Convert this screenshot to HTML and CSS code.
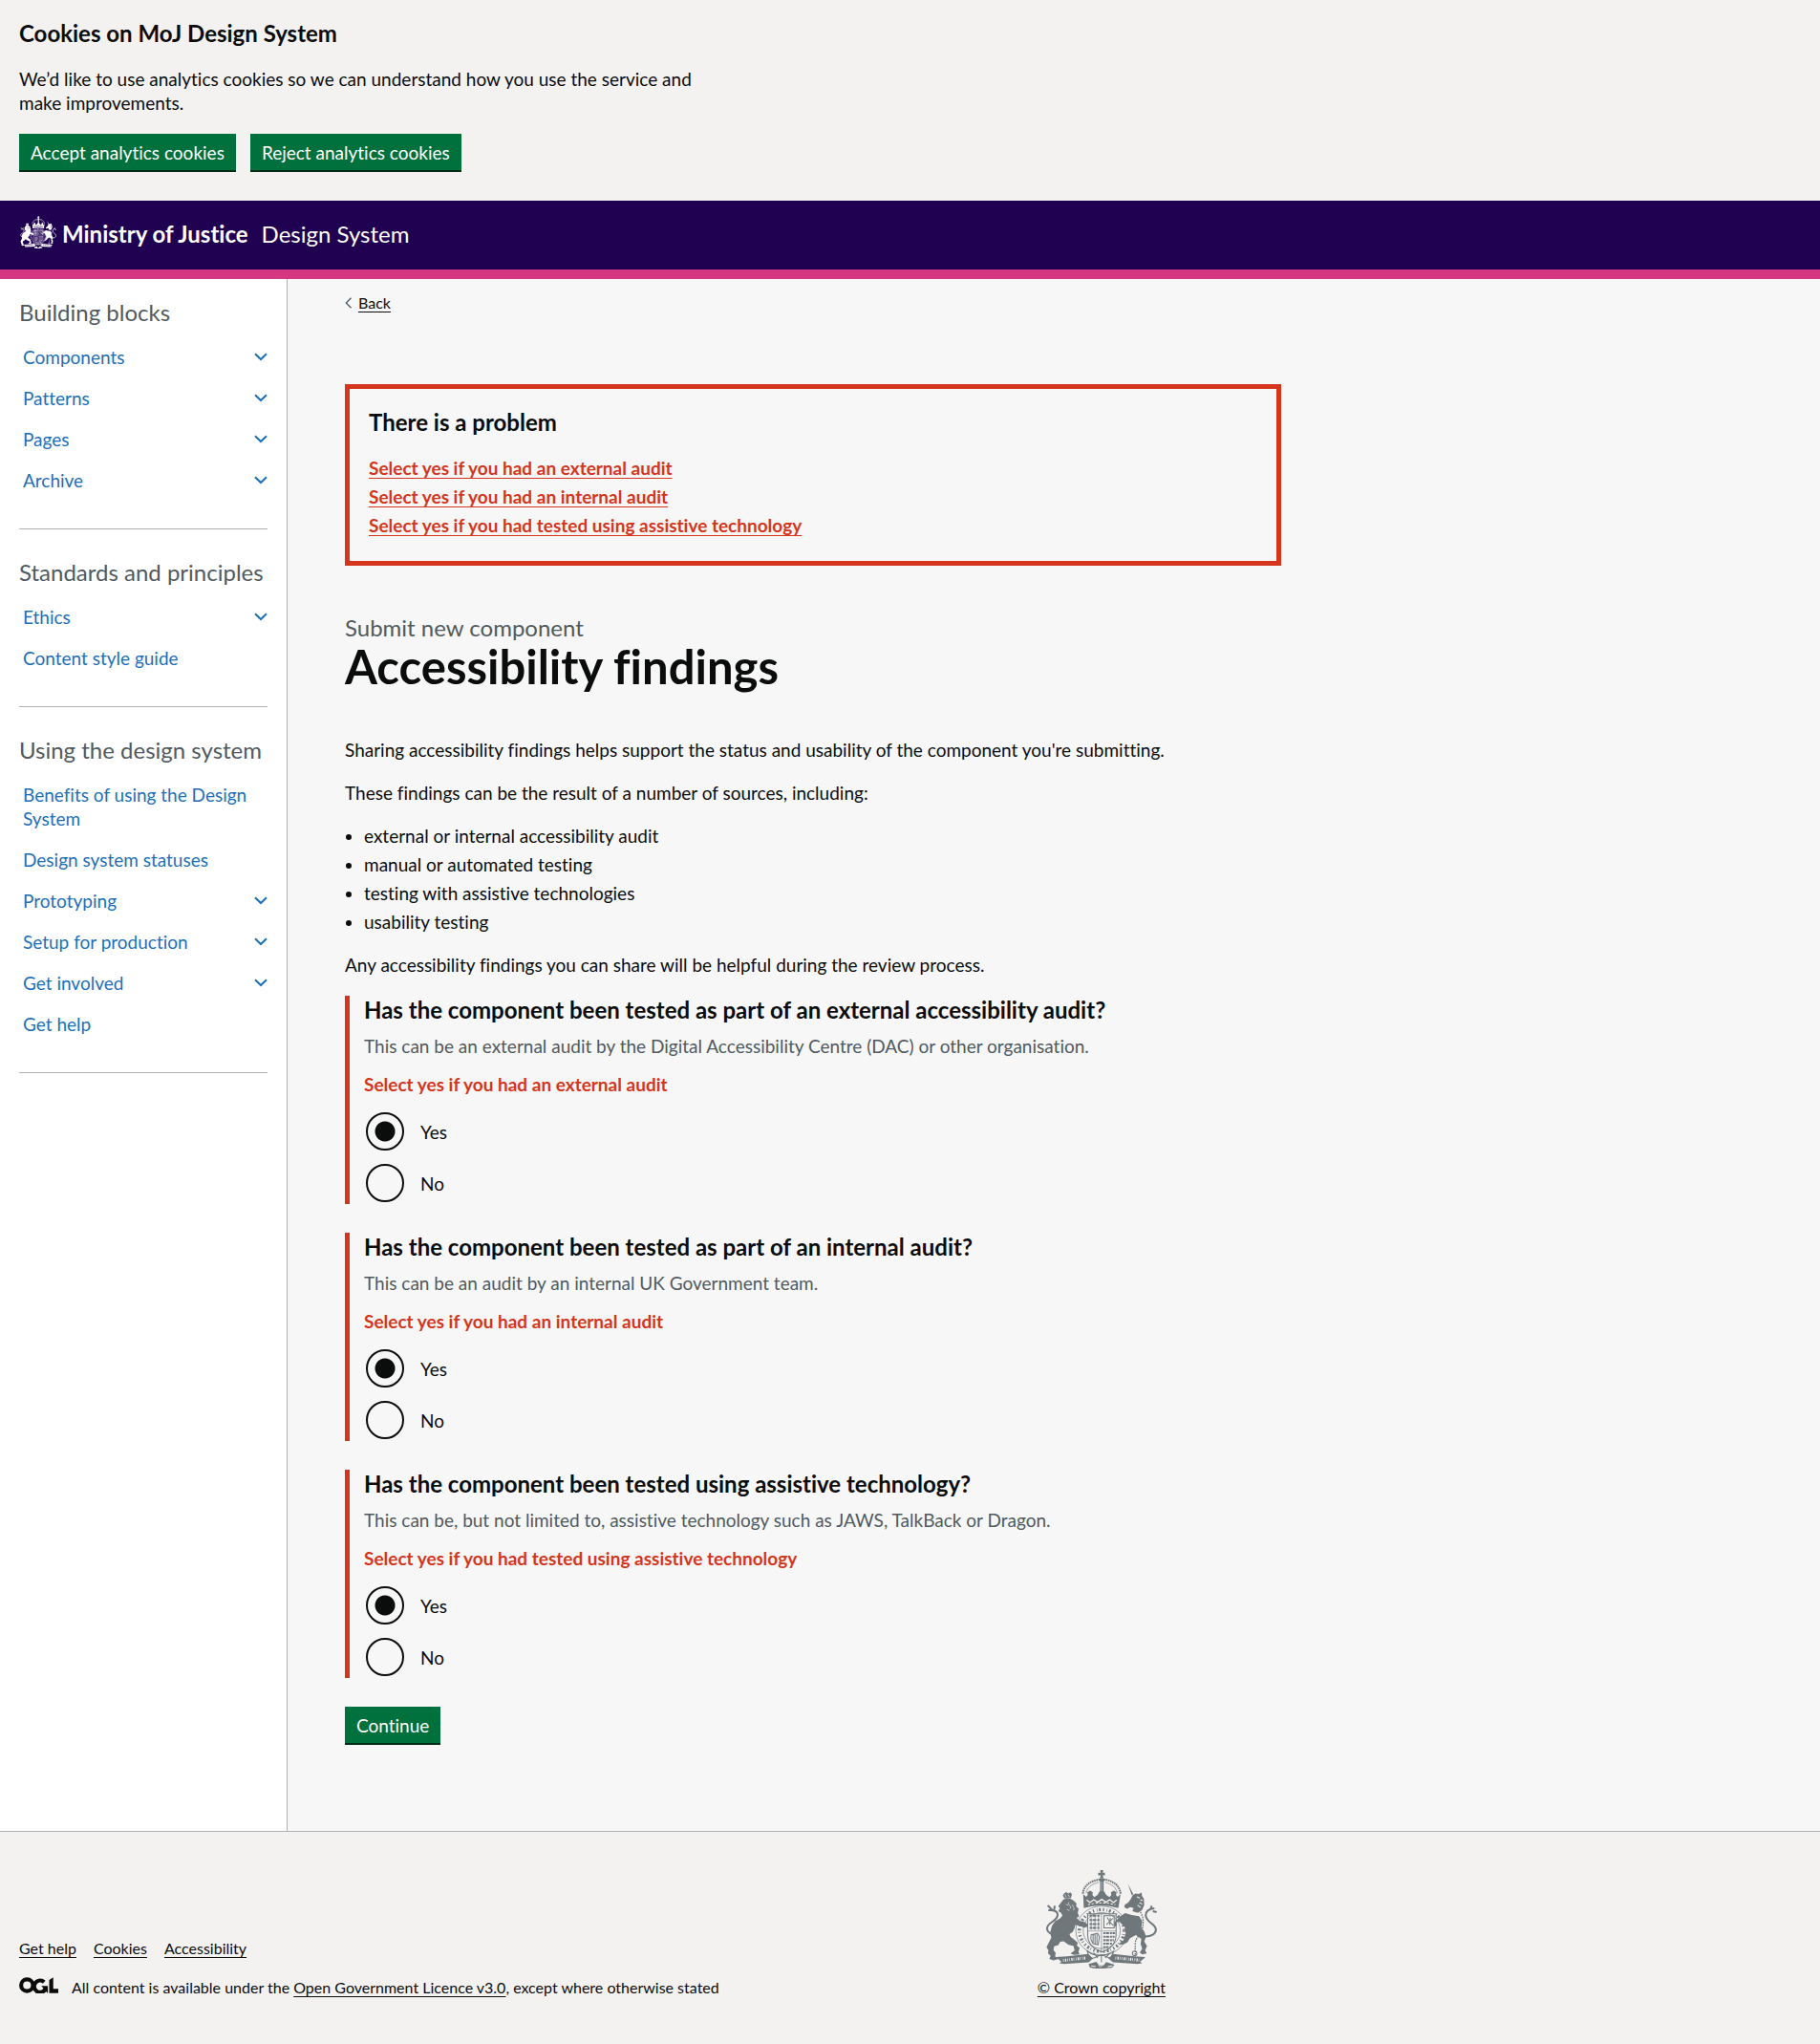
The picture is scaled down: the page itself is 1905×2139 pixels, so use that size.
FILE: index.html
```html
<!DOCTYPE html>
<html lang="en">
<head>
<meta charset="utf-8">
<meta name="viewport" content="width=device-width, initial-scale=1">
<title>Accessibility findings - MoJ Design System</title>
<link rel="stylesheet" href="styles.css">
</head>
<body>
<svg class="sprite" aria-hidden="true">
  <symbol id="chevron" viewBox="0 0 14 9"><path d="M1 1.2l6 5.8 6-5.8" fill="none" stroke="currentColor" stroke-width="2"/></symbol>
  <symbol id="crest" viewBox="110 80 350 306" preserveAspectRatio="none">
    <g fill="currentColor" stroke="none">
      <!-- crown -->
      <path d="M282 80h10l-2 8h7v8h-7l3 10h-12l3-10h-8v-8h8z"/>
      <path d="M279 107h17v6l-3 3v34h-11v-34l-3-3z"/>
      <path d="M229 154l9 9 5-5-1-9 9-5 8 5-1 9 6 6 10-7 5-9 8-8 9 8 5 9 10 7 6-6-1-9 9-5 8 5-1 9 5 5 9-9-7 44-26 -6-28-2-28 2-26 6z"/>
      <!-- lion -->
      <path d="M170 152l6-4 6 5 7-4 5 7-4 12h-20l-5-9z"/>
      <path d="M167 171l10-3 14 2 9 6 8 8-1 9 8 7-3 12 4 13-8 3 8 9 20 6 8 8-3 6-9 2-16-7-12-1-2 10-6 11-10 7 4 9 12 9 10 9-3 9 9 7-4 12 4 8-17 2-12-5 13-9-3-14-17-4-14-11-11 2-6 10-13 4-2 12 7 9-2 10 11 8-16 5-13-5 4-9-8-8 1-10-6-9 8-16 7-14-3-17 5-19 10-15 16-9 7-9-5-9-8-4 5-9-5-7z"/>
      <!-- unicorn -->
      <path d="M369 123l17 32-5 3z"/>
      <path d="M384 158l9-5 10 1 9-4 1 10 6 9 1 20-7 16-13 8-17-5 4-10-11-3-9 5-9-4 1-8 11-7 8-11z"/>
      <path d="M346 223l14-9 21 6 23 3 10 16-3 20 9 11 6 17-6 15 9 14-6 13 5 10-14 3-8-6 8-12-5-14 2-16-17-12-18 10-9 13-14 7-14-2 16-12 7-21-3-20-15-15-11-1 1 12-9 3 2-14z"/>
      <!-- motto ribbon -->
      <path d="M144 350l35-2 66-7 15 14-14 12-77 5-15-2 7-5z"/>
      <path d="M424 350l-35-2-66-7-15 14 14 12 77 5 15-2-7-5z"/>
      <path d="M246 372l24-7 9 11 14 0 8-10 26 8-8 10-28 2h-24l-17-3z"/>
    </g>
    <g fill="none" stroke="currentColor">
      <path d="M228 153c3-26 24-40 55-44M346 153c-3-26-24-40-52-44" stroke-width="6" stroke-dasharray="5 2"/>
      <path d="M238 152c5-19 16-28 40-34M336 152c-5-19-16-28-38-34" stroke-width="2"/>
      <!-- tails -->
      <path d="M160 284c-22 2-45-8-44-24 1-18 34-21 33-42-1-13-14-14-29-13m12-1l-14-14m20 14l2-13" stroke-width="6"/>
      <path d="M416 286c25 3 44-8 40-25-4-14-28-19-31-39-1-15 10-21 27-23m-13 4l5-12m3 17l12 3" stroke-width="6"/>
      <!-- garter -->
      <ellipse cx="287" cy="268" rx="81" ry="76" stroke-width="2"/>
      <ellipse cx="287" cy="268" rx="70" ry="65" stroke-width="10" stroke-dasharray="4 8 2 5 6 7"/>
      <ellipse cx="287" cy="268" rx="58" ry="56" stroke-width="2"/>
      <!-- quartered shield -->
      <path d="M243 216h89v65c0 32-22 46-44 54-23-8-45-22-45-54z" stroke-width="3"/>
      <path d="M286 216v118M243 269h89" stroke-width="4" opacity=".45"/>
      <path d="M249 222h31m-31 13h31m-31 13h31m-31 12h31" stroke-width="6" stroke-dasharray="7 2 12 3"/>
      <path d="M254 218v48m12-48v48m11-48v48" stroke-width="2"/>
      <path d="M294 222h32v38h-32zM302 250l20-20m-18-3l9 15 10 10m-9-23l-2 22" stroke-width="3"/>
      <path d="M254 281l20-5 6 11-4 25-16-3-7-14zM260 280v26m6-27v30m6-29v28" stroke-width="3"/>
      <path d="M292 276h37m-37 11h35m-35 11h33m-33 11h27m-27 10h15" stroke-width="6" stroke-dasharray="6 2 10 3"/>
      <!-- buckle and strap -->
      <path d="M241 330c19 21 57 20 83 2l-9 23-28-12-28 12-12-5zM262 337l12 16m12-10v24m12-14l15-15" stroke-width="3"/>
      <!-- chain -->
      <path d="M408 210c13 20 9 43 5 57s-20 24-21 40v40" stroke-width="4" stroke-dasharray="5 3"/>
      <circle cx="390" cy="339" r="7" stroke-width="3"/>
    </g>
    <g class="crest-light" fill="none">
      <path d="M240 173l10 8 12-9 12 8 13-9 13 9 12-8 12 9 10-8" stroke-width="4"/>
      <path d="M244 188l21-5 22-1 22 1 21 5" stroke-width="3" stroke-dasharray="7 5"/>
      <path d="M287 117v29" stroke-width="3" stroke-dasharray="3 3"/>
      <path d="M184 180c-6 11 12 9 4 20m8-13c-2 8 9 8 2 18M175 187l7 2m-4 13l8 4" stroke-width="2"/>
      <path d="M172 156l4 8m6-8l4 8" stroke-width="2"/>
      <path d="M397 163l9 4m2 5l7 3m-10 6l9 5m-15 3l10 7" stroke-width="3"/>
      <path d="M166 361l72-8M330 353l74 7" stroke-width="9" stroke-dasharray="2 4 4 3 2 5"/>
      <path d="M254 378l14 2m38 0l14-2" stroke-width="3"/>
      <circle cx="283" cy="376" r="5" stroke-width="2"/>
    </g>
  </symbol>
</svg>

<section class="cookie-banner" aria-label="Cookies on MoJ Design System">
  <h2 class="heading-m cookie-title">Cookies on MoJ Design System</h2>
  <p class="cookie-text">We’d like to use analytics cookies so we can understand how you use the service and make improvements.</p>
  <div class="button-row">
    <button class="button" type="button">Accept analytics cookies</button>
    <button class="button" type="button">Reject analytics cookies</button>
  </div>
</section>

<header class="header">
  <svg class="header-crest" aria-hidden="true"><use href="#crest"/></svg>
  <a class="header-org" href="#">Ministry of Justice</a>
  <a class="header-service" href="#">Design System</a>
</header>

<div class="layout">
  <nav class="sidebar" aria-label="Sections">
    <section class="nav-section">
      <h2 class="nav-title">Building blocks</h2>
      <ul class="nav-list">
        <li><a class="nav-link" href="#">Components<svg class="chevron"><use href="#chevron"/></svg></a></li>
        <li><a class="nav-link" href="#">Patterns<svg class="chevron"><use href="#chevron"/></svg></a></li>
        <li><a class="nav-link" href="#">Pages<svg class="chevron"><use href="#chevron"/></svg></a></li>
        <li><a class="nav-link" href="#">Archive<svg class="chevron"><use href="#chevron"/></svg></a></li>
      </ul>
    </section>
    <section class="nav-section">
      <h2 class="nav-title">Standards and principles</h2>
      <ul class="nav-list">
        <li><a class="nav-link" href="#">Ethics<svg class="chevron"><use href="#chevron"/></svg></a></li>
        <li><a class="nav-link" href="#">Content style guide</a></li>
      </ul>
    </section>
    <section class="nav-section">
      <h2 class="nav-title">Using the design system</h2>
      <ul class="nav-list">
        <li><a class="nav-link" href="#">Benefits of using the Design System</a></li>
        <li><a class="nav-link" href="#">Design system statuses</a></li>
        <li><a class="nav-link" href="#">Prototyping<svg class="chevron"><use href="#chevron"/></svg></a></li>
        <li><a class="nav-link" href="#">Setup for production<svg class="chevron"><use href="#chevron"/></svg></a></li>
        <li><a class="nav-link" href="#">Get involved<svg class="chevron"><use href="#chevron"/></svg></a></li>
        <li><a class="nav-link" href="#">Get help</a></li>
      </ul>
    </section>
  </nav>

  <main class="main">
    <div class="back">
      <svg class="back-arrow" viewBox="0 0 8 12" aria-hidden="true"><path d="M6.500.8L1.300 6l5.200 5.200" fill="none" stroke="currentColor" stroke-width="1.300"/></svg>
      <a class="link" href="#">Back</a>
    </div>

    <div class="error-summary" role="alert">
      <h2 class="heading-m">There is a problem</h2>
      <ul class="error-list">
        <li><a href="#external-yes">Select yes if you had an external audit</a></li>
        <li><a href="#internal-yes">Select yes if you had an internal audit</a></li>
        <li><a href="#assistive-yes">Select yes if you had tested using assistive technology</a></li>
      </ul>
    </div>

    <span class="caption">Submit new component</span>
    <h1 class="heading-xl">Accessibility findings</h1>

    <p class="body">Sharing accessibility findings helps support the status and usability of the component you're submitting.</p>
    <p class="body">These findings can be the result of a number of sources, including:</p>
    <ul class="bullets">
      <li>external or internal accessibility audit</li>
      <li>manual or automated testing</li>
      <li>testing with assistive technologies</li>
      <li>usability testing</li>
    </ul>
    <p class="body">Any accessibility findings you can share will be helpful during the review process.</p>

    <form class="form">
      <div class="group">
        <fieldset aria-describedby="external-hint external-error">
          <legend class="heading-m">Has the component been tested as part of an external accessibility audit?</legend>
          <p class="hint" id="external-hint">This can be an external audit by the Digital Accessibility Centre (DAC) or other organisation.</p>
          <p class="error" id="external-error">Select yes if you had an external audit</p>
          <div class="radios">
            <div class="radio"><input type="radio" name="external" id="external-yes" checked><label for="external-yes">Yes</label></div>
            <div class="radio"><input type="radio" name="external" id="external-no"><label for="external-no">No</label></div>
          </div>
        </fieldset>
      </div>
      <div class="group">
        <fieldset aria-describedby="internal-hint internal-error">
          <legend class="heading-m">Has the component been tested as part of an internal audit?</legend>
          <p class="hint" id="internal-hint">This can be an audit by an internal UK Government team.</p>
          <p class="error" id="internal-error">Select yes if you had an internal audit</p>
          <div class="radios">
            <div class="radio"><input type="radio" name="internal" id="internal-yes" checked><label for="internal-yes">Yes</label></div>
            <div class="radio"><input type="radio" name="internal" id="internal-no"><label for="internal-no">No</label></div>
          </div>
        </fieldset>
      </div>
      <div class="group">
        <fieldset aria-describedby="assistive-hint assistive-error">
          <legend class="heading-m">Has the component been tested using assistive technology?</legend>
          <p class="hint" id="assistive-hint">This can be, but not limited to, assistive technology such as JAWS, TalkBack or Dragon.</p>
          <p class="error" id="assistive-error">Select yes if you had tested using assistive technology</p>
          <div class="radios">
            <div class="radio"><input type="radio" name="assistive" id="assistive-yes" checked><label for="assistive-yes">Yes</label></div>
            <div class="radio"><input type="radio" name="assistive" id="assistive-no"><label for="assistive-no">No</label></div>
          </div>
        </fieldset>
      </div>
      <button class="button" type="button">Continue</button>
    </form>
  </main>
</div>

<footer class="footer">
  <div class="footer-inner">
    <div class="footer-info">
      <nav class="footer-links" aria-label="Support links">
        <a class="link" href="#">Get help</a>
        <a class="link" href="#">Cookies</a>
        <a class="link" href="#">Accessibility</a>
      </nav>
      <div class="licence">
        <svg class="ogl" viewBox="0 0 483 196" role="img" aria-label="Open Government Licence">
          <g fill="none" stroke="currentColor">
            <circle cx="98" cy="98" r="73" stroke-width="49"/>
            <path d="M309 59a73 73 0 1 0 15 86" stroke-width="49"/>
          </g>
          <path fill="currentColor" d="M274 106h80v88h-3zM371 32L421 0v143h62v51H371z"/>
        </svg>
        <span>All content is available under the <a class="link" href="#">Open Government Licence v3.0</a>, except where otherwise stated</span>
      </div>
    </div>
    <div class="copyright">
      <svg class="footer-crest" aria-hidden="true"><use href="#crest"/></svg>
      <a class="link" href="#">© Crown copyright</a>
    </div>
  </div>
</footer>
</body>
</html>
```
FILE: styles.css
```css
* { box-sizing: border-box; }

body {
  margin: 0;
  min-height: 100vh;
  display: flex;
  flex-direction: column;
  background: #f3f2f1;
  color: #0b0c0c;
  font: 19px/25px Lato, "Liberation Sans", sans-serif;
  font-variant-ligatures: none;
}

h1, h2, p, ul, fieldset { margin: 0; padding: 0; border: 0; }
ul { list-style: none; }
.sprite { display: none; }

.heading-m { font-size: 24px; line-height: 30px; font-weight: 700; }
.heading-xl { font-size: 49px; line-height: 50px; font-weight: 700; margin-bottom: 50px; }
.caption { display: block; font-size: 24px; line-height: 30px; color: #505a5f; }
.body { margin-bottom: 20px; }

.link {
  color: #0b0c0c;
  font-size: 16px;
  line-height: 20px;
  text-decoration: underline;
  text-decoration-thickness: 1px;
  text-underline-offset: 3px;
  text-decoration-skip-ink: none;
}

.button {
  display: block;
  height: 38px;
  padding: 0 12px;
  border: 0;
  background: #00703c;
  box-shadow: 0 2px 0 #002d18;
  color: #fff;
  font: inherit;
  font-variant-ligatures: none;
  cursor: pointer;
}

/* Cookie banner */
.cookie-banner { padding: 20px 20px 32px; background: #f3f2f1; }
.cookie-title { margin-bottom: 20px; }
.cookie-text { max-width: 720px; margin-bottom: 20px; }
.button-row { display: flex; gap: 15px; }

/* Header */
.header {
  display: flex;
  align-items: center;
  height: 82px;
  padding: 0 20px 2px;
  background: #200050;
  border-bottom: 10px solid #d53880;
  font-size: 24px;
  line-height: 30px;
}
.header a { color: #fff; text-decoration: none; }
.header-crest { width: 38px; height: 34px; margin: 0 6px 4px 1px; color: #fff; --crest-gap: #200050; }
.header-org { font-weight: 700; margin-right: 14px; }
.crest-light { stroke: var(--crest-gap); }

/* Layout */
.layout { display: flex; flex: 1 0 auto; background: #f7f7f7; }

.sidebar {
  flex: 0 0 301px;
  padding: 20px 20px 30px;
  background: #fff;
  border-right: 1px solid #b1b4b6;
}
.nav-section { padding-bottom: 29px; margin-bottom: 30px; border-bottom: 1px solid #b1b4b6; }
.nav-title { margin-bottom: 10px; font-size: 24px; line-height: 30px; font-weight: 400; color: #505a5f; }
.nav-link {
  display: flex;
  align-items: center;
  justify-content: space-between;
  padding: 9px 0 9px 4px;
  color: #1d70b8;
  text-decoration: none;
}
.chevron { flex: none; width: 14px; height: 9px; }

/* Main column */
.main { flex: 1; max-width: 1040px; padding: 15px 0 90px 60px; }
.back { display: flex; align-items: center; gap: 6px; margin-bottom: 75px; line-height: 20px; }
.back-arrow { width: 8px; height: 12px; color: #505a5f; }

.error-summary { margin-bottom: 50px; padding: 20px; border: 5px solid #d4351c; }
.error-summary .heading-m { margin-bottom: 20px; }
.error-list li { margin-bottom: 5px; }
.error-list a {
  color: #d4351c;
  font-weight: 700;
  text-decoration-thickness: 1px;
  text-underline-offset: 3px;
}

.bullets { margin-bottom: 20px; padding-left: 20px; list-style: disc; }
.bullets li { margin-bottom: 5px; }

/* Questions */
.group { margin-bottom: 30px; padding-left: 15px; border-left: 5px solid #d4351c; }
.group legend { padding: 0; margin-bottom: 10px; }
.hint { margin-bottom: 15px; color: #505a5f; }
.error { margin-bottom: 15px; color: #d4351c; font-weight: 700; }
.radios { display: grid; gap: 10px; }
.radio { display: flex; align-items: center; gap: 17px; height: 44px; padding-left: 2px; }
.radio input {
  appearance: none;
  width: 40px;
  height: 40px;
  margin: 0;
  border: 2px solid #0b0c0c;
  border-radius: 50%;
}
.radio input:checked { background: radial-gradient(circle, #0b0c0c 10px, transparent 11px); }

/* Footer */
.footer {
  padding: 40px 20px 49px;
  border-top: 1px solid #b1b4b6;
  background: #f3f2f1;
  font-size: 16px;
  line-height: 20px;
}
.footer-inner { display: flex; align-items: flex-end; justify-content: space-between; max-width: 1200px; }
.footer-links { display: flex; gap: 18px; margin-bottom: 20px; }
.licence { display: flex; align-items: center; gap: 14px; }
.ogl { width: 41px; height: 17px; margin-bottom: 4px; }
.copyright { display: flex; flex-direction: column; align-items: center; gap: 10px; }
.footer-crest { width: 117px; height: 103px; color: #6f777b; --crest-gap: #f3f2f1; }
```
